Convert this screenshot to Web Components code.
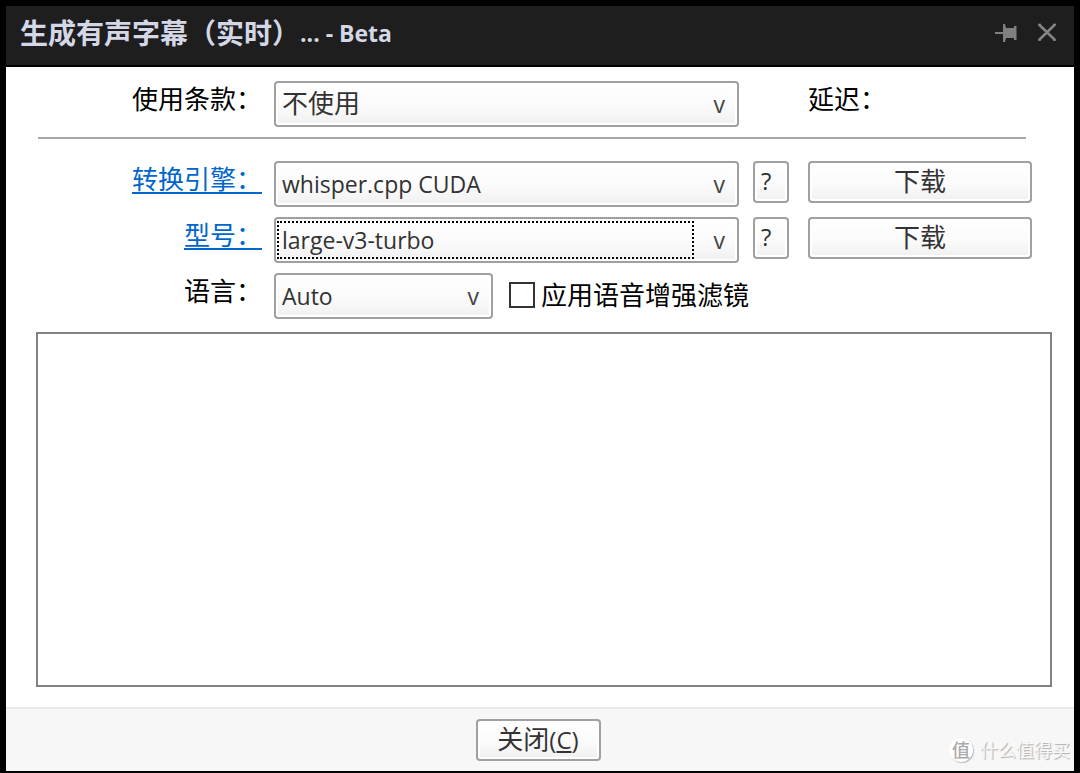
<!DOCTYPE html>
<html lang="zh-CN">
<head>
<meta charset="utf-8">
<title>生成有声字幕</title>
<style>
  html, body { margin: 0; background: #000; }
  body { font-family: "Open Sans", "Noto Sans CJK SC", sans-serif; color: #000; }
</style>
</head>
<body>
<dialog-window>
  <title-bar slot="title"><span>生成有声字幕（实时）</span><small slot="suffix">... - Beta</small></title-bar>
  <setting-row label="使用条款：" value="不使用" cjk><delay-label>延迟：</delay-label></setting-row>
  <rule-line></rule-line>
  <setting-row label="转换引擎：" href="#engine" value="whisper.cpp CUDA">
    <push-button kind="help">?</push-button><push-button kind="wide">下载</push-button>
  </setting-row>
  <setting-row label="型号：" href="#model" value="large-v3-turbo" active>
    <push-button kind="help">?</push-button><push-button kind="wide">下载</push-button>
  </setting-row>
  <setting-row label="语言：" value="Auto" narrow><check-field>应用语音增强滤镜</check-field></setting-row>
  <log-box></log-box>
  <push-button slot="footer" kind="close">关闭<span>(<u>C</u>)</span></push-button>
  <site-mark slot="mark">什么值得买</site-mark>
</dialog-window>

<script>
const define = (name, html, setup) => customElements.define(name, class extends HTMLElement {
  constructor() {
    super();
    const template = document.createElement('template');
    template.innerHTML = html;
    this.attachShadow({ mode: 'open' }).append(template.content.cloneNode(true));
  }
  connectedCallback() { if (setup) setup(this, this.shadowRoot); }
});

define('dialog-window', `
  <style>
    :host { display: flex; flex-direction: column; box-sizing: border-box; min-height: 100vh; padding: 6px 6px 2px; background: #000; position: relative; }
    main { flex: 1; display: flex; flex-direction: column; background: #fff; padding: 14px 22px 20px 30px; }
    footer { display: flex; justify-content: center; background: #f7f7f7; border-top: 2px solid #e9e9e9; padding: 10px 4px 10px 0; }
    .mark { position: absolute; right: 10px; bottom: 10px; }
  </style>
  <slot name="title"></slot>
  <main><slot></slot></main>
  <footer><slot name="footer"></slot></footer>
  <div class="mark"><slot name="mark"></slot></div>`);

define('title-bar', `
  <style>
    :host { display: block; }
    header { display: flex; align-items: center; height: 59px; padding: 0 15px 0 14px; background: #1e1e1e; color: #d4d8e6; border-bottom: 2px solid #000; box-shadow: 0 1px #999; }
    h1 { flex: 1; display: flex; align-items: center; margin: 0; font-size: 28px; line-height: 40px; font-weight: 700; white-space: nowrap; padding-bottom: 6px; }
    ::slotted(small) { font-size: 23px; }
    button { display: block; border: 0; padding: 0; margin: 0 0 8px 17px; background: none; width: 24px; height: 24px; }
    svg { display: block; }
  </style>
  <header>
    <h1><slot></slot><slot name="suffix"></slot></h1>
    <button aria-label="置顶"><svg width="24" height="24" viewBox="0 0 24 24"><path d="M1 12H9V4H11L12 8H20V6H22.500V20H20V18H12L11 22H9V14H1Z" fill="#808080"/></svg></button>
    <button aria-label="关闭"><svg width="24" height="24" viewBox="0 0 24 24"><path d="M4 4.500L20 20M20 4.500L4 20" stroke="#858585" stroke-width="2.500"/><path d="M3 4.500h3M18 4.500h3M3 20h3M18 20h3" stroke="#858585" stroke-width="1.500"/></svg></button>
  </header>`);

define('rule-line', `
  <style>
    :host { display: block; margin: 0 26px 22px 2px; }
    hr { margin: 0; border: 0; height: 2px; background: #a6a6a6; }
  </style><hr>`);

define('setting-row', `
  <style>
    :host { display: grid; grid-template-columns: 224px minmax(0, 465fr) minmax(0, 281fr); column-gap: 12px; align-items: start; height: 46px; margin: 0 20px 10px 2px; }
    :host([narrow]) { grid-template-columns: 224px minmax(0, 219fr) minmax(0, 527fr); }
    label { font-size: 26px; line-height: 36px; text-align: right; white-space: nowrap; }
    a { color: #0066cc; text-decoration-thickness: 2px; text-underline-offset: 3px; }
    .combo { display: grid; }
    .combo > * { grid-area: 1 / 1; }
    select { appearance: none; box-sizing: border-box; width: 100%; height: 46px; margin: 0; padding: 0 44px 0 6px; border: 2px solid #a0a0a0; border-radius: 4px; background: linear-gradient(#fff, #fbfbfb 55%, #f0f0f0); box-shadow: inset 0 0 0 2px #fff; color: #333; font-family: inherit; font-size: 23px; outline: 0; }
    :host([cjk]) select { font-size: 26px; padding-bottom: 2px; }
    .arrow { justify-self: end; align-self: center; padding-right: 14px; font-size: 23px; line-height: 30px; color: #444; pointer-events: none; }
    .ring { display: none; margin: 4px 45px 4px 3px; border: 2px dotted #000; pointer-events: none; }
    :host([active]) .ring { display: block; }
    .extra { display: flex; align-items: start; gap: 19px; padding-left: 2px; }
  </style>
  <label for="choice"></label>
  <div class="combo"><select id="choice"></select><span class="arrow" aria-hidden="true">v</span><span class="ring"></span></div>
  <div class="extra"><slot></slot></div>`,
(host, root) => {
  const label = root.querySelector('label');
  const href = host.getAttribute('href');
  let target = label;
  if (href) {
    target = document.createElement('a');
    target.href = href;
    label.replaceChildren(target);
  }
  target.textContent = host.getAttribute('label');
  root.querySelector('select').replaceChildren(new Option(host.getAttribute('value')));
});

define('delay-label', `
  <style>:host { display: block; margin-left: 55px; font-size: 26px; line-height: 36px; white-space: nowrap; }</style>
  <slot></slot>`);

define('push-button', `
  <style>
    :host { display: block; }
    :host([kind=wide]) { flex: 1; }
    button { box-sizing: border-box; width: 100%; height: 42px; margin: 0; padding: 0 0 2px; border: 2px solid #a0a0a0; border-radius: 4px; background: linear-gradient(#fff, #fbfbfb 55%, #f0f0f0); box-shadow: inset 0 0 0 2px #fff; color: #333; font-family: inherit; font-size: 26px; line-height: 36px; white-space: nowrap; }
    :host([kind=help]) { width: 36px; }
    :host([kind=help]) button { font-size: 24px; text-align: left; padding-left: 6px; }
    :host([kind=close]) { width: 125px; }
    ::slotted(span) { font-size: 24px; }
  </style>
  <button type="button"><slot></slot></button>`);

define('check-field', `
  <style>
    :host { display: block; padding-left: 2px; }
    label { display: flex; align-items: center; gap: 6px; height: 44px; font-size: 26px; line-height: 36px; white-space: nowrap; }
    input { appearance: none; box-sizing: border-box; width: 26px; height: 26px; margin: 0; border: 2px solid #333; background: #fff; }
  </style>
  <label><input type="checkbox"><slot></slot></label>`);

define('log-box', `
  <style>
    :host { display: flex; flex: 1; margin-top: 3px; }
    textarea { flex: 1; box-sizing: border-box; min-height: 120px; margin: 0; border: 2px solid #828282; background: #fff; resize: none; outline: 0; }
  </style>
  <textarea aria-label="输出"></textarea>`);

define('site-mark', `
  <style>
    :host { display: flex; align-items: center; gap: 7px; font-size: 18px; line-height: 26px; color: #f7f7f7; text-shadow: 1px 1px 1px #aaa; white-space: nowrap; pointer-events: none; }
    b { width: 24px; height: 24px; border-radius: 50%; background: #fff; box-shadow: 1px 1px 1px #bbb; color: #aaa; font-size: 18px; line-height: 24px; font-weight: 500; text-align: center; text-shadow: none; }
  </style>
  <b>值</b><span><slot></slot></span>`);
</script>
</body>
</html>
